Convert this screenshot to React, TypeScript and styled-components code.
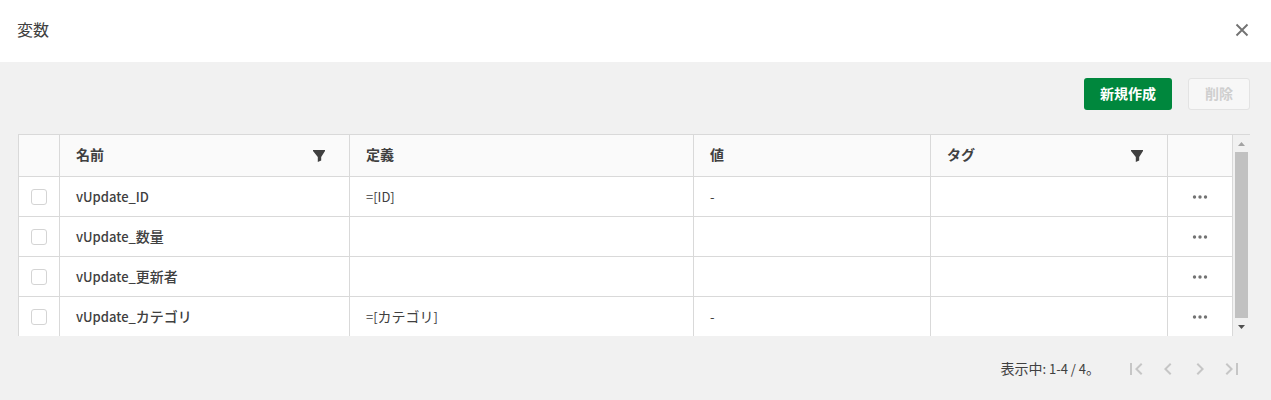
import React from "react";
import styled, { createGlobalStyle } from "styled-components";

const GlobalStyle = createGlobalStyle`
  * { box-sizing: border-box; }
  body {
    margin: 0;
    background: #f1f1f1;
    color: #404040;
    font-family: "Noto Sans CJK JP", "Noto Sans", sans-serif;
    font-size: 14px;
    line-height: 20px;
  }
`;

const Header = styled.header`
  display: flex;
  align-items: center;
  justify-content: space-between;
  height: 62px;
  padding: 0 21px 2px 17px;
  background: #fff;
`;

const Title = styled.h1`
  margin: 0;
  padding-bottom: 2px;
  font-size: 16px;
  line-height: 24px;
  font-weight: 400;
`;

const IconButton = styled.button<{ $size?: number }>`
  display: flex;
  align-items: center;
  justify-content: center;
  width: ${({ $size = 32 }) => $size}px;
  height: ${({ $size = 32 }) => $size}px;
  padding: 0;
  border: 0;
  background: transparent;
  color: #737373;
  &:disabled { color: #c6c6c6; }
`;

const Content = styled.main`
  padding: 16px 21px 0 18px;
`;

const Toolbar = styled.div`
  display: flex;
  justify-content: flex-end;
  gap: 16px;
  margin-bottom: 24px;
`;

const Button = styled.button<{ $primary?: boolean }>`
  height: 32px;
  padding: 0 16px 2px;
  border: ${({ $primary }) => ($primary ? "0" : "1px solid #e3e3e3")};
  border-radius: 3px;
  background: ${({ $primary }) => ($primary ? "#00873d" : "#f7f7f7")};
  color: ${({ $primary }) => ($primary ? "#fff" : "#cfcfcf")};
  font: inherit;
  font-weight: 700;
`;

const TableFrame = styled.div`
  display: flex;
  height: 202px;
  overflow: hidden;
  border-top: 1px solid #d9d9d9;
`;

const TableArea = styled.div`
  flex: 1;
  min-width: 0;
`;

const Table = styled.table`
  width: 100%;
  table-layout: fixed;
  border-collapse: separate;
  border-spacing: 0;
  border-left: 1px solid #d9d9d9;
`;

const Column = styled.col<{ $width: number }>`
  width: ${({ $width }) => $width}px;
`;

const HeadCell = styled.th`
  height: 42px;
  padding: 0 24px 0 16px;
  border-right: 1px solid #d9d9d9;
  border-bottom: 1px solid #d9d9d9;
  background: #fafafa;
  text-align: left;
  font-weight: 700;
`;

const HeadContent = styled.div`
  display: flex;
  align-items: center;
  justify-content: space-between;
`;

const HeadLabel = styled.span`
  display: block;
  padding-bottom: 4px;
`;

const Cell = styled.td<{ $strong?: boolean }>`
  height: 40px;
  padding: 0 16px;
  border-right: 1px solid #d9d9d9;
  border-bottom: 1px solid #d9d9d9;
  background: #fff;
  font-weight: ${({ $strong }) => ($strong ? 500 : 400)};
`;

const ControlCell = styled(Cell)`
  padding: 0;
`;

const Latin = styled.span`
  font-size: 13px;
`;

const CellCenter = styled.div`
  display: flex;
  align-items: center;
  justify-content: center;
`;

const Checkbox = styled.input`
  appearance: none;
  width: 16px;
  height: 16px;
  margin: 0;
  border: 1px solid #d4d4d4;
  border-radius: 3px;
  background: #fff;
  &:checked { background: #00873d; }
`;

const Scrollbar = styled.div`
  display: flex;
  flex-direction: column;
  align-items: center;
  width: 17px;
  padding-bottom: 1px;
  background: #f1f1f1;
`;

const ScrollArrow = styled.svg`
  display: block;
  flex: none;
  width: 17px;
  height: 17px;
`;

const ScrollThumb = styled.div`
  flex: 1;
  width: 13px;
  background: #c1c1c1;
`;

const Footer = styled.footer`
  display: flex;
  align-items: center;
  justify-content: flex-end;
  gap: 20px;
  padding: 17px 2px 0 0;
`;

const Status = styled.span`
  padding-bottom: 2px;
`;

const Pager = styled.nav`
  display: flex;
`;

const rows = [
  { name: "vUpdate_ID", definition: "=[ID]", value: "-" },
  { name: "vUpdate_数量", definition: "", value: "" },
  { name: "vUpdate_更新者", definition: "", value: "" },
  { name: "vUpdate_カテゴリ", definition: "=[カテゴリ]", value: "-" },
];

const columnWidths = [41, 290, 344, 237, 237, 65];

const pagerButtons = [
  { label: "最初のページ", path: "M18.41 16.59 13.82 12l4.59-4.59L17 6l-6 6 6 6zM6 6h2v12H6z" },
  { label: "前のページ", path: "M15.41 7.41 14 6l-6 6 6 6 1.41-1.41L10.83 12z" },
  { label: "次のページ", path: "M10 6 8.59 7.41 13.17 12l-4.58 4.59L10 18l6-6z" },
  { label: "最後のページ", path: "M5.59 7.41 10.18 12l-4.59 4.59L7 18l6-6-6-6zM16 6h2v12h-2z" },
];

// Sets the Latin runs of a mixed string slightly smaller than the Japanese ones.
const MixedText = ({ text }: { text: string }) => (
  <>
    {text
      .split(/([\x20-\x7e]+)/)
      .filter(Boolean)
      .map((part, i) => (/^[\x20-\x7e]/.test(part) ? <Latin key={i}>{part}</Latin> : part))}
  </>
);

const FilterIcon = () => (
  <svg width="12" height="12" viewBox="0 0 12 12" fill="#404040" aria-hidden="true">
    <path d="M0 0h12v1L8.200 7v3.500L4.800 12V7L0 1z" />
  </svg>
);

const MoreIcon = () => (
  <svg width="16" height="16" viewBox="0 0 16 16" fill="#737373" aria-hidden="true">
    <circle cx="2.5" cy="8" r="1.7" />
    <circle cx="8" cy="8" r="1.7" />
    <circle cx="13.5" cy="8" r="1.7" />
  </svg>
);

export default function App() {
  return (
    <>
      <GlobalStyle />
      <Header>
        <Title>変数</Title>
        <IconButton $size={16} aria-label="閉じる">
          <svg width="16" height="16" viewBox="0 0 16 16" fill="none" stroke="currentColor" strokeWidth="1.9">
            <path d="M2.5 2.5l11 11M13.5 2.5l-11 11" />
          </svg>
        </IconButton>
      </Header>
      <Content>
        <Toolbar>
          <Button $primary>新規作成</Button>
          <Button disabled>削除</Button>
        </Toolbar>
        <TableFrame>
          <TableArea>
            <Table>
              <colgroup>
                {columnWidths.map((width, i) => (
                  <Column key={i} $width={width} />
                ))}
              </colgroup>
              <thead>
                <tr>
                  <HeadCell />
                  <HeadCell scope="col">
                    <HeadContent><HeadLabel>名前</HeadLabel><FilterIcon /></HeadContent>
                  </HeadCell>
                  <HeadCell scope="col"><HeadLabel>定義</HeadLabel></HeadCell>
                  <HeadCell scope="col"><HeadLabel>値</HeadLabel></HeadCell>
                  <HeadCell scope="col">
                    <HeadContent><HeadLabel>タグ</HeadLabel><FilterIcon /></HeadContent>
                  </HeadCell>
                  <HeadCell />
                </tr>
              </thead>
              <tbody>
                {rows.map((row) => (
                  <tr key={row.name}>
                    <ControlCell>
                      <CellCenter>
                        <Checkbox type="checkbox" aria-label={row.name} />
                      </CellCenter>
                    </ControlCell>
                    <Cell $strong><MixedText text={row.name} /></Cell>
                    <Cell><MixedText text={row.definition} /></Cell>
                    <Cell><MixedText text={row.value} /></Cell>
                    <Cell />
                    <ControlCell>
                      <CellCenter>
                        <IconButton aria-label={`${row.name} のメニュー`}>
                          <MoreIcon />
                        </IconButton>
                      </CellCenter>
                    </ControlCell>
                  </tr>
                ))}
              </tbody>
            </Table>
          </TableArea>
          <Scrollbar aria-hidden="true">
            <ScrollArrow viewBox="0 0 17 17" fill="#a3a3a3">
              <path d="M5 11h7L8.500 7z" />
            </ScrollArrow>
            <ScrollThumb />
            <ScrollArrow viewBox="0 0 17 17" fill="#505050">
              <path d="M5 7h7l-3.500 4z" />
            </ScrollArrow>
          </Scrollbar>
        </TableFrame>
        <Footer>
          <Status><MixedText text="表示中: 1-4 / 4。" /></Status>
          <Pager aria-label="ページ">
            {pagerButtons.map((button) => (
              <IconButton key={button.label} aria-label={button.label} disabled>
                <svg width="24" height="24" viewBox="0 0 24 24" fill="currentColor">
                  <path d={button.path} />
                </svg>
              </IconButton>
            ))}
          </Pager>
        </Footer>
      </Content>
    </>
  );
}
